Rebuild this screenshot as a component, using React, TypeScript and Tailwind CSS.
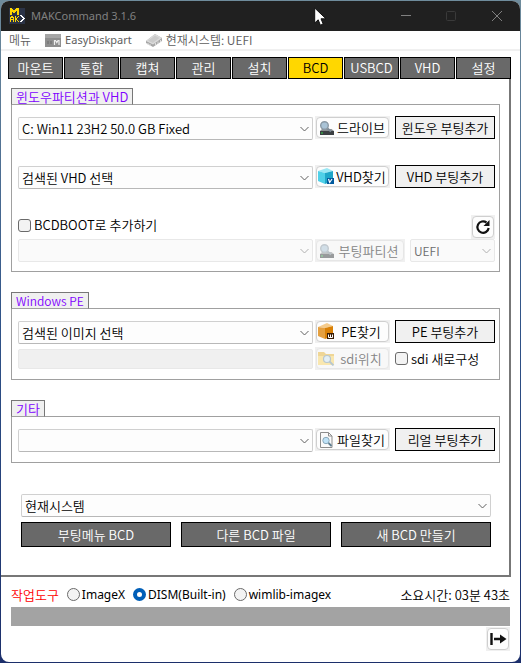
import { useState } from "react";
import type { ReactNode } from "react";

const tabs = ["마운트", "통합", "캡쳐", "관리", "설치", "BCD", "USBCD", "VHD", "설정"];
const tools = ["ImageX", "DISM(Built-in)", "wimlib-imagex"];

function LogoIcon() {
  return (
    <svg width="16" height="16" viewBox="0 0 16 16" shapeRendering="crispEdges">
      <rect width="16" height="16" fill="#2b3346" />
      <path d="M1 7V0h2v1h1v1h2V1h1V0h3v7H8V3H7v1H6v1H4V4H3v3z" fill="#ffd800" />
      <path
        d="M1 14V9h1V8h2v1h1v5H4v-2H2v2zM2 10v1h2v-1zM6 14V8h1v2h1V9h1V8h1v1H9v1H8v2h1v1h1v1H9v-1H8v-1H7v2z"
        fill="#ffd800"
      />
      <path d="M11 7h2v1h1v1h1v1h1v1h-1v1h-1v1h-1v1h-2v-1h1v-1h1v-1h1v-1h-1V9h-1V8h-1z" fill="#fff" />
    </svg>
  );
}

function DiskpartIcon() {
  return (
    <svg width="16" height="13" viewBox="0 0 16 13">
      <rect width="16" height="13" fill="#8f8f8f" />
      <rect width="16" height="4" fill="#a6a6a6" />
      <path d="M2 7h2v3H2zM5 7h2v3H5z" fill="#7d7d7d" />
      <path d="M9.500 11V6.500h1l1.300 2 1.200-2h1V11" fill="none" stroke="#eee" strokeWidth="1.200" />
    </svg>
  );
}

function ChipIcon() {
  return (
    <svg width="16" height="13" viewBox="0 0 16 13">
      <path d="M0 7l9-7 7 4v3l-9 6-7-4z" fill="#a6a6a6" />
      <path d="M0 7l9-7 7 4-9 6.500z" fill="#dcdcdc" />
      <path d="M2 6.800l7-5.300 4.500 2.600-6.600 4.800z" fill="#cbcbcb" />
      <path d="M2 9v2M4 10v2M9.500 9v2.500M12 7.500v2.500M14.500 6v2" stroke="#ddd" />
    </svg>
  );
}

function DriveIcon() {
  return (
    <svg width="15" height="14" viewBox="0 0 15 14">
      <path d="M3 8h9.500L15 10H1z" fill="#8b8f92" />
      <rect x="1" y="10" width="14" height="4" fill="#3b3f42" />
      <rect x="2" y="11.500" width="2" height="1" fill="#35d04a" />
      <path d="M8 7l4 3.500" stroke="#7d8b96" strokeWidth="2" />
      <circle cx="5.500" cy="4.500" r="3.800" fill="#a9c3d6" stroke="#8b9aa5" strokeWidth="1.400" />
    </svg>
  );
}

function VhdIcon() {
  return (
    <svg width="17" height="17" viewBox="0 0 17 17">
      <path d="M0 3l9-3 6 3-8 2z" fill="#9be8f5" />
      <path d="M0 3l7 2v11l-7-3z" fill="#4fd0e8" />
      <path d="M7 5l8-2v10l-8 3z" fill="#1ea6c8" />
      <rect x="9" y="10" width="7" height="6" fill="#005a9e" />
      <path d="M10.500 11l1.200 3.500 2.300-3.500" fill="none" stroke="#fff" strokeWidth="1.200" />
    </svg>
  );
}

function WimIcon() {
  return (
    <svg width="17" height="17" viewBox="0 0 17 17">
      <path d="M0 4l9-4 6 3-8 2z" fill="#f5cb8b" />
      <path d="M0 4l7 1v11l-7-3z" fill="#e5a040" />
      <path d="M7 5l8-2v10l-8 3z" fill="#d98005" />
      <rect x="9" y="10" width="7" height="6" fill="#3a1d05" />
      <path d="M10.500 11.500v3h4v-3M12.500 11.500v3" fill="none" stroke="#fff" />
    </svg>
  );
}

function FolderIcon() {
  return (
    <svg width="17" height="15" viewBox="0 0 17 15">
      <path d="M0 1h6l2 2h8v11H0z" fill="#e8b636" />
      <path d="M0 5h16v9H0z" fill="#fbd768" />
      <circle cx="9" cy="8" r="3.500" fill="#cfe7f4" stroke="#7897a8" strokeWidth="1.200" />
      <path d="M11.500 10.500l4 4" stroke="#7897a8" strokeWidth="1.800" />
    </svg>
  );
}

function FileIcon() {
  return (
    <svg width="15" height="16" viewBox="0 0 15 16">
      <path d="M1.500.5h8l3.500 3.500v11.500H1.500z" fill="#fafafa" stroke="#8d8d8d" />
      <path d="M9.500.5V4H13" fill="none" stroke="#8d8d8d" />
      <circle cx="7" cy="8.500" r="3.200" fill="#bfe2f7" stroke="#8aa9bb" />
      <path d="M9.500 11l3 3" stroke="#5f7f92" strokeWidth="1.800" />
    </svg>
  );
}

function ReloadIcon() {
  return (
    <svg width="16" height="16" viewBox="0 0 16 16">
      <path d="M11.500 3.500A5.700 5.700 0 1 0 13.700 9" fill="none" stroke="#111" strokeWidth="2.200" />
      <path d="M14.500 1v6h-6z" fill="#111" />
    </svg>
  );
}

function ExitIcon() {
  return (
    <svg width="17" height="14" viewBox="0 0 17 14">
      <path d="M1.500 1v12M4 7h8" stroke="#111" strokeWidth="2.400" fill="none" />
      <path d="M10 2.500L16.500 7 10 11.500z" fill="#111" />
    </svg>
  );
}

type ComboProps = { label: string; value: string; disabled?: boolean; className?: string };

function Combo({ label, value, disabled, className = "flex-1" }: ComboProps) {
  return (
    <div className={`relative h-[23px] min-w-0 ${className}`}>
      <select
        aria-label={label}
        disabled={disabled}
        className="block h-full w-full appearance-none rounded-[2px] border border-[#d0d0d0] border-b-[#b8b8b8] bg-[#fdfdfd] pr-5 pl-[3px] text-black opacity-100 disabled:border-[#e8e8e8] disabled:bg-[#fafafa] disabled:text-[#6d6d6d]"
      >
        <option>{value}</option>
      </select>
      <svg
        className={`pointer-events-none absolute top-2 right-1 ${disabled ? "text-[#b0b0b0]" : "text-[#606060]"}`}
        width="9"
        height="8"
        viewBox="0 0 9 8"
      >
        <path d="M.5 2l4 4 4-4" fill="none" stroke="currentColor" />
      </svg>
    </div>
  );
}

type IconButtonProps = { icon: ReactNode; children: ReactNode; disabled?: boolean; className?: string };

function IconButton({ icon, children, disabled, className = "w-[75px]" }: IconButtonProps) {
  return (
    <div className={`h-[23px] shrink-0 bg-[#f0f0f0] p-px ${className}`}>
      <button
        disabled={disabled}
        className="flex h-full w-full items-center rounded border border-[#cfcfcf] bg-[#fdfdfd] pr-px pl-px whitespace-nowrap disabled:border-[#e6e6e6] disabled:bg-[#f8f8f8] disabled:text-[#858585]"
      >
        <span className={`flex w-[17px] shrink-0 justify-center ${disabled ? "opacity-50" : ""}`}>{icon}</span>
        <span className="flex-1 text-center">{children}</span>
      </button>
    </div>
  );
}

function SquareButton({ label, children }: { label: string; children: ReactNode }) {
  return (
    <div className="h-6 w-6 shrink-0 bg-[#f0f0f0] p-px">
      <button
        aria-label={label}
        className="flex h-full w-full items-center justify-center rounded border border-[#cfcfcf] bg-[#fdfdfd]"
      >
        {children}
      </button>
    </div>
  );
}

function BootButton({ children }: { children: ReactNode }) {
  return (
    <button className="h-[23px] w-[100px] shrink-0 border border-black bg-[#f0f0f0] leading-5 whitespace-nowrap">
      {children}
    </button>
  );
}

function Check({ children }: { children: ReactNode }) {
  return (
    <label className="flex h-5 items-center gap-[3px] whitespace-nowrap">
      <input
        type="checkbox"
        className="h-[13px] w-[13px] appearance-none rounded-[3px] border border-[#6a6a6a] bg-[#f3f3f3] checked:bg-[#005fb8]"
      />
      {children}
    </label>
  );
}

type GroupProps = { title: string; titleClass?: string; className: string; children: ReactNode };

function Group({ title, titleClass = "", className, children }: GroupProps) {
  return (
    <section>
      <h2
        className={`relative -mb-px h-[17px] w-fit border border-[#777] border-b-[#a0a0a0] bg-[#f0f0f0] px-1 leading-[15px] text-[#8000ff] ${titleClass}`}
      >
        {title}
      </h2>
      <div className={`flex flex-col border border-[#a0a0a0] pt-[11px] pr-1 pl-[6px] ${className}`}>{children}</div>
    </section>
  );
}

export default function App() {
  const [tab, setTab] = useState("BCD");
  const [tool, setTool] = useState("DISM(Built-in)");

  return (
    <div className="min-h-screen bg-linear-to-b from-[#6f8c9c] via-[#2f5288] to-[#1c2f6b] p-px font-['Noto_Sans_CJK_KR',sans-serif] text-[13px] leading-4 font-[350] text-black">
      <div className="flex min-h-[661px] flex-col overflow-hidden rounded-lg bg-white">
        <header className="relative flex h-[30px] items-center bg-[#202020] pl-2 font-['Noto_Sans',sans-serif] text-[11px] text-[#808080]">
          <LogoIcon />
          <h1 className="ml-[6px] flex-1 font-normal">MAKCommand 3.1.6</h1>
          <button aria-label="Minimize" className="flex h-full w-[45px] items-center justify-center">
            <svg width="10" height="10" viewBox="0 0 10 10" stroke="#808080">
              <path d="M0 4.500h10" />
            </svg>
          </button>
          <button aria-label="Maximize" disabled className="flex h-full w-[45px] items-center justify-center">
            <svg width="10" height="10" viewBox="0 0 10 10" stroke="#3a3a3a" fill="none">
              <rect x=".5" y=".5" width="9" height="9" rx="1" />
            </svg>
          </button>
          <button aria-label="Close" className="flex h-full w-[47px] items-center justify-center">
            <svg width="10" height="10" viewBox="0 0 10 10" stroke="#808080">
              <path d="M0 0l10 10M10 0L0 10" />
            </svg>
          </button>
          {/* mouse pointer */}
          <svg className="absolute top-[6px] left-[313px]" width="13" height="20" viewBox="0 0 13 20">
            <path d="M.7 1v15l3.500-3.200 2.200 5.400 2.800-1.200L7 11.800h5z" fill="#fff" stroke="#111" />
          </svg>
        </header>

        <nav className="flex h-5 items-center border-b-2 border-[#f0f0f0] pl-2 text-[12px] text-[#5d5d5d]">
          <button>메뉴</button>
          <button className="ml-[14px] flex items-center gap-1 font-['Noto_Sans',sans-serif] text-[11px] font-normal">
            <DiskpartIcon />
            EasyDiskpart
          </button>
          <button className="ml-[14px] flex items-center gap-1">
            <ChipIcon />
            현재시스템: UEFI
          </button>
        </nav>

        <main className="mr-[9px]">
          <div role="tablist" className="mt-[6px] flex gap-px pl-[7px]">
            {tabs.map((t) => (
              <button
                key={t}
                role="tab"
                aria-selected={t === tab}
                onClick={() => setTab(t)}
                className={`h-[22px] flex-1 border border-black ${t === tab ? "bg-[#ffd700] text-black" : "bg-[#696969] text-white"}`}
              >
                {t}
              </button>
            ))}
          </div>

          <div className="border-r-2 border-b-2 border-[#777] pt-[9px] pr-[9px] pb-7 pl-[10px]">
            <div className="flex flex-col gap-5">
              <Group title="윈도우파티션과 VHD" className="pb-2">
                <div className="flex h-6 gap-[5px]">
                  <div className="flex min-w-0 flex-1 gap-[2px]">
                    <Combo
                      label="윈도우파티션"
                      value="C: Win11 23H2 50.0 GB Fixed"
                      className="flex-1 self-end"
                    />
                    <IconButton icon={<DriveIcon />}>드라이브</IconButton>
                  </div>
                  <BootButton>윈도우 부팅추가</BootButton>
                </div>
                <div className="mt-[25px] flex h-6 gap-[5px]">
                  <div className="flex min-w-0 flex-1 gap-[2px]">
                    <Combo label="VHD" value="검색된 VHD 선택" className="flex-1 self-end" />
                    <IconButton icon={<VhdIcon />}>VHD찾기</IconButton>
                  </div>
                  <BootButton>VHD 부팅추가</BootButton>
                </div>
                <div className="mt-[26px] flex h-6 items-start justify-between">
                  <Check>BCDBOOT로 추가하기</Check>
                  <SquareButton label="새로고침">
                    <ReloadIcon />
                  </SquareButton>
                </div>
                <div className="flex gap-[5px] pb-px">
                  <div className="flex min-w-0 flex-1 gap-[2px]">
                    <Combo label="부팅파티션" value="" disabled />
                    <IconButton icon={<DriveIcon />} disabled className="w-[90px]">
                      부팅파티션
                    </IconButton>
                  </div>
                  <Combo label="펌웨어" value="UEFI" disabled className="w-[85px] text-[12px]" />
                </div>
              </Group>

              <Group title="Windows PE" titleClass="text-[12px]" className="gap-[3px] pb-[9px]">
                <div className="flex h-6 gap-[5px]">
                  <div className="flex min-w-0 flex-1 gap-[2px]">
                    <Combo label="이미지" value="검색된 이미지 선택" className="flex-1 self-end" />
                    <IconButton icon={<WimIcon />}>PE찾기</IconButton>
                  </div>
                  <BootButton>PE 부팅추가</BootButton>
                </div>
                <div className="flex gap-[5px]">
                  <div className="flex min-w-0 flex-1 items-center gap-[2px]">
                    <input
                      aria-label="sdi 위치"
                      disabled
                      className="h-5 min-w-0 flex-1 rounded-[2px] border border-[#e8e8e8] bg-[#f0f0f0]"
                    />
                    <IconButton icon={<FolderIcon />} disabled>
                      sdi위치
                    </IconButton>
                  </div>
                  <div className="flex w-[100px] items-center">
                    <Check>sdi 새로구성</Check>
                  </div>
                </div>
              </Group>

              <Group title="기타" className="pb-[10px]">
                <div className="flex h-6 gap-[5px]">
                  <div className="flex min-w-0 flex-1 gap-[2px]">
                    <Combo label="파일" value="" className="flex-1 self-end" />
                    <IconButton icon={<FileIcon />}>파일찾기</IconButton>
                  </div>
                  <BootButton>리얼 부팅추가</BootButton>
                </div>
              </Group>
            </div>

            <div className="mt-[31px] flex flex-col gap-[5px] pr-[9px] pl-[10px]">
              <div className="flex">
                <Combo label="BCD 저장소" value="현재시스템" />
              </div>
              <div className="flex gap-[10px]">
                {["부팅메뉴 BCD", "다른 BCD 파일", "새 BCD 만들기"].map((b) => (
                  <button key={b} className="h-[25px] flex-1 border border-black bg-[#696969] text-white">
                    {b}
                  </button>
                ))}
              </div>
            </div>
          </div>
        </main>

        <footer className="mr-[10px] ml-[10px] flex flex-col pt-[9px]">
          <div className="flex h-[17px] items-center">
            <span className="text-[#ff0000]">작업도구</span>
            {tools.map((t) => (
              <label
                key={t}
                className="ml-2 flex items-center gap-[2px] font-['Noto_Sans',sans-serif] text-[12px] font-normal"
              >
                <input
                  type="radio"
                  name="tool"
                  checked={t === tool}
                  onChange={() => setTool(t)}
                  className="h-[13px] w-[13px] appearance-none rounded-full border border-[#6a6a6a] bg-[#f3f3f3] checked:border-4 checked:border-[#005fb8] checked:bg-white"
                />
                {t}
              </label>
            ))}
            <span className="ml-auto">소요시간: 03분 43초</span>
          </div>
          <div role="progressbar" aria-label="진행률" className="mt-1 h-[19px] bg-[#a3a3a3]" />
          <div className="flex justify-end pt-px">
            <SquareButton label="종료">
              <ExitIcon />
            </SquareButton>
          </div>
        </footer>
      </div>
    </div>
  );
}
